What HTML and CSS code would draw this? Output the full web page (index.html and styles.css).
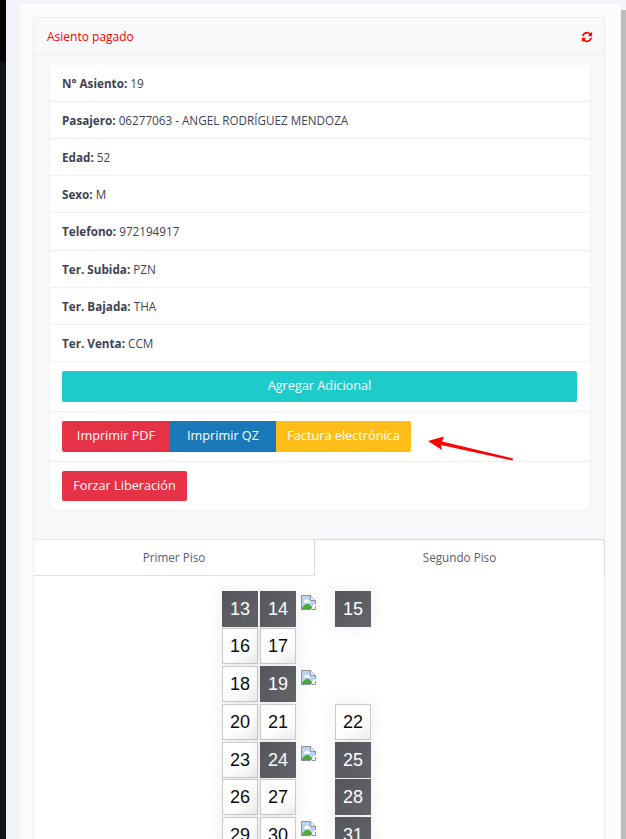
FILE: index.html
```html
<!DOCTYPE html>
<html lang="es">
<head>
<meta charset="utf-8">
<title>Asiento pagado</title>
<link rel="stylesheet" href="styles.css">
</head>
<body>
<svg class="sprite" width="0" height="0" aria-hidden="true">
  <symbol id="broken" viewBox="0 0 15 15">
    <path d="M.5.5H9.500L14.500 5.500V14.500H.5Z" fill="#fff" stroke="#8d9299"/>
    <path d="M1 1H9V6H14V9L8 14H1Z" fill="#bcd2f2"/>
    <path d="M3.500 6c1-2 3.500-2 4.500 0 1 0 1.500.5 1.500 1.500H3c0-1 0-1.500.5-1.500Z" fill="#fff"/>
    <path d="M1 14V13C3.500 9 6.500 8 8.500 9.500L13 14Z" fill="#4fa83a"/>
    <path d="M9.500.5V5.500H14.500" fill="#eef0f2" stroke="#8d9299"/>
    <path d="M15 8.500 9.500 15H15Z" fill="#fff"/>
    <path d="M14.500 11V14.500H11" fill="none" stroke="#8d9299"/>
  </symbol>
</svg>
<div class="shell">
  <aside class="rail"></aside>
  <main class="content">
    <section class="page">
      <div class="card">
        <header class="card-head">
          <span class="status">Asiento pagado</span>
          <svg class="refresh" viewBox="0 0 1792 1792" width="12" height="12"><path fill="#f00" d="M1639 1056q0 5-1 7-64 268-268 434.500t-478 166.500q-146 0-282.500-55t-243.500-157l-129 129q-19 19-45 19t-45-19-19-45v-448q0-26 19-45t45-19h448q26 0 45 19t19 45-19 45l-137 137q71 66 161 102t187 36q134 0 250-65t186-179q11-17 53-117 8-23 30-23h192q13 0 22.500 9.500t9.500 22.500zm25-800v448q0 26-19 45t-45 19h-448q-26 0-45-19t-19-45 19-45l138-138q-148-137-349-137-134 0-250 65t-186 179q-11 17-53 117-8 23-30 23h-199q-13 0-22.500-9.500t-9.500-22.500v-7q65-268 270-434.500t480-166.500q146 0 284 55.500t245 156.500l130-129q19-19 45-19t45 19 19 45z"/></svg>
        </header>
        <div class="card-body">
          <ul class="list">
            <li class="row"><b>N° Asiento:</b> 19</li>
            <li class="row"><b>Pasajero:</b> 06277063 - ANGEL RODRÍGUEZ MENDOZA</li>
            <li class="row"><b>Edad:</b> 52</li>
            <li class="row"><b>Sexo:</b> M</li>
            <li class="row row-tall"><b>Telefono:</b> 972194917</li>
            <li class="row"><b>Ter. Subida:</b> PZN</li>
            <li class="row"><b>Ter. Bajada:</b> THA</li>
            <li class="row"><b>Ter. Venta:</b> CCM</li>
            <li class="row row-btn"><a class="btn btn-teal btn-block">Agregar Adicional</a></li>
            <li class="row row-btn">
              <div class="btn-group">
                <a class="btn btn-red btn-pdf">Imprimir PDF</a>
                <a class="btn btn-blue btn-qz">Imprimir QZ</a>
                <a class="btn btn-yellow btn-fe">Factura electrónica</a>
              </div>
            </li>
            <li class="row row-btn row-last"><a class="btn btn-red btn-free">Forzar Liberación</a></li>
          </ul>
        </div>
      </div>

      <nav class="tabs">
        <a class="tab">Primer Piso</a>
        <a class="tab tab-active">Segundo Piso</a>
      </nav>
      <div class="tab-pane">
        <div class="seats">
          <div class="seat taken">13</div><div class="seat taken">14</div><div class="wheel"><svg width="15" height="15"><use href="#broken"/></svg></div><div class="seat taken">15</div>
          <div class="seat">16</div><div class="seat">17</div><div></div><div></div>
          <div class="seat">18</div><div class="seat taken">19</div><div class="wheel"><svg width="15" height="15"><use href="#broken"/></svg></div><div></div>
          <div class="seat">20</div><div class="seat">21</div><div></div><div class="seat">22</div>
          <div class="seat">23</div><div class="seat taken">24</div><div class="wheel"><svg width="15" height="15"><use href="#broken"/></svg></div><div class="seat taken">25</div>
          <div class="seat">26</div><div class="seat">27</div><div></div><div class="seat taken">28</div>
          <div class="seat">29</div><div class="seat">30</div><div class="wheel"><svg width="15" height="15"><use href="#broken"/></svg></div><div class="seat taken">31</div>
        </div>
      </div>
    </section>
  </main>
  <div class="scrollbar"></div>
</div>
<svg class="arrow" width="90" height="34" viewBox="0 0 90 34"><path d="M2 8 18 3.500 16 8.500 87 25.500 86.500 27.500 15 12 16 17Z" fill="#f00"/></svg>
</body>
</html>
```

FILE: styles.css
```css
* { box-sizing: border-box; }
html, body { margin: 0; height: 839px; overflow: hidden; }
body { font-family: "Open Sans", "Noto Sans", sans-serif; font-size: 11.700px; line-height: 18px; color: #3f4254; background: #f1f3f8; position: relative; }
.sprite { position: absolute; }
.shell { display: flex; height: 839px; }
.rail { width: 6px; flex: none; background: linear-gradient(#050505 0, #050505 62px, #11131b 62px); }
.content { flex: 1; padding: 4px 0 0 14px; min-width: 0; }
.page { width: 600px; height: 835px; background: #fcfcfc; padding: 13px 15px 0 13px; overflow: hidden; }
.scrollbar { width: 5px; flex: none; background: #bdbdbd; margin-top: 10px; height: 829px; }

.card { background: #f8f9fb; border: 1px solid #e9ebef; border-bottom: 0; height: 522px; }
.card-head { height: 37px; padding: 1px 11px 0 13px; display: flex; align-items: center; justify-content: space-between; border-bottom: 1px solid #e9ebef; }
.status { color: #f00; font-size: 12px; }
.card-body { padding: 10px 13px 0 15px; }
.list { list-style: none; margin: 0; padding: 0; background: #fff; border: 1px solid #f0f1f4; border-top: 0; border-radius: 3px; }
.row { padding: 9px 12px; border-bottom: 1px solid #f0f1f4; height: 37px; white-space: nowrap; }
.row-tall { height: 38px; }
.row b { font-weight: 700; }
.row-btn { height: 50px; padding: 9px 12px; }
.row-last { border-bottom: 0; height: 48px; }

.btn { display: block; height: 31px; line-height: 29px; font-size: 12.700px; color: #fff; text-align: center; border-radius: 2px; }
.btn-block { width: 515px; }
.btn-group { display: flex; }
.btn-group .btn { border-radius: 0; }
.btn-group .btn:first-child { border-radius: 2px 0 0 2px; }
.btn-group .btn:last-child { border-radius: 0 2px 2px 0; }
.btn-teal { background: #1ecbcb; }
.btn-red { background: #e63246; }
.btn-blue { background: #1878b8; }
.btn-yellow { background: #ffbe17; }
.btn-pdf { width: 108px; }
.btn-qz { width: 106px; }
.btn-fe { width: 135px; }
.btn-free { width: 125px; height: 30px; }

.tabs { display: flex; background: #f8f9fb; height: 37px; align-items: flex-end; border-left: 1px solid #e9ebef; }
.tab { display: block; text-align: center; background: #fff; color: #595d6e; line-height: 34px; height: 37px; }
.tab:first-child { width: 280px; border-bottom: 1px solid #dcdfe4; border-top: 1px solid #e4e7ec; }
.tab-active { width: 291px; border: 1px solid #d8dade; border-bottom: 0; border-radius: 3px 3px 0 0; }
.tab-pane { background: #fff; height: 280px; padding-top: 14.500px; border-left: 1px solid #e9ebef; border-right: 1px solid #e9ebef; }

.seats { display: grid; grid-template-columns: 36px 36px 35px 36px; grid-auto-rows: 36px; column-gap: 2px; row-gap: 1.750px; margin-left: 188px; width: max-content; }
.seat { display: flex; align-items: center; justify-content: center; font-family: "Liberation Sans", Arial, sans-serif; font-size: 18px; color: #0c0c0c; background: linear-gradient(135deg, #fff 60%, #efefef); border: 1px solid #cbcbcb; box-shadow: 0 0 18px rgba(0,0,0,.08); }
.taken { color: #fff; background: linear-gradient(135deg, #54555b, #65666c); border: 0; }
.wheel { padding: 4px 0 0 3px; line-height: 0; }

.arrow { position: absolute; left: 426px; top: 433px; }
```
